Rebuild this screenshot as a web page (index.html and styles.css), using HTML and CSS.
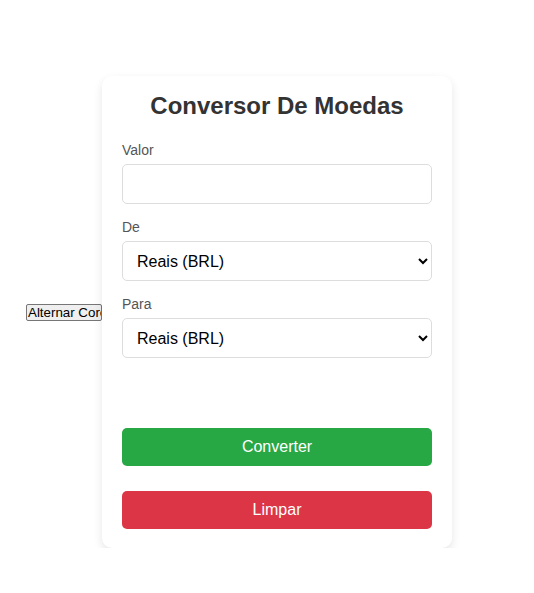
FILE: index.html
```html
<!DOCTYPE html>
<html lang="pt-BR">
<head>
<meta charset="UTF-8">
<title>Conversor De Moedas</title>
<link rel="stylesheet" href="styles.css">
</head>
<body>
  <button class="toggle-btn" type="button">Alternar Cores</button>
  <div class="card">
    <h2 class="title">Conversor De Moedas</h2>
    <div class="field">
      <label class="label" for="valor">Valor</label>
      <input class="control" id="valor" type="number">
    </div>
    <div class="field">
      <label class="label" for="de">De</label>
      <select class="control" id="de">
        <option>Reais (BRL)</option>
        <option>Dólar (USD)</option>
        <option>Euro (EUR)</option>
      </select>
    </div>
    <div class="field">
      <label class="label" for="para">Para</label>
      <select class="control" id="para">
        <option>Reais (BRL)</option>
        <option>Dólar (USD)</option>
        <option>Euro (EUR)</option>
      </select>
    </div>
    <div class="result"></div>
    <div class="actions">
      <button class="btn btn-convert" type="button">Converter</button>
      <button class="btn btn-clear" type="button">Limpar</button>
    </div>
  </div>
</body>
</html>
```
FILE: styles.css
```css
html, body {
  margin: 0;
  padding: 0;
  background: #ffffff;
}

body {
  display: flex;
  align-items: center;
  padding: 76px 0 0 26px;
  font-family: "Liberation Sans", Arial, sans-serif;
}

.toggle-btn {
  flex-shrink: 0;
  width: 76px;
  height: 17px;
  padding: 0 1px;
  margin: 0;
  border: 1px solid #767676;
  border-radius: 2px;
  background: #efefef;
  color: #000;
  font-family: "Liberation Sans", Arial, sans-serif;
  font-size: 13.33px;
  line-height: 15px;
  white-space: nowrap;
  overflow: hidden;
  text-align: left;
  box-sizing: border-box;
}

.card {
  flex-shrink: 0;
  width: 350px;
  box-sizing: border-box;
  padding: 16px 20px 19px;
  background: #fff;
  border-radius: 10px;
  box-shadow: 0 4px 10px rgba(0, 0, 0, 0.1);
}

.title {
  margin: 0 0 22px;
  text-align: center;
  font-size: 24px;
  line-height: 28px;
  font-weight: bold;
  color: #333;
}

.field {
  margin-bottom: 15px;
}

.label {
  display: block;
  font-size: 14px;
  line-height: 16px;
  color: #555;
  margin-bottom: 6px;
}

.control {
  display: block;
  width: 100%;
  height: 40px;
  box-sizing: border-box;
  padding: 10px;
  border: 1px solid #ddd;
  border-radius: 5px;
  background: #fff;
  font-family: "Liberation Sans", Arial, sans-serif;
  font-size: 16px;
  color: #000;
}

.result {
  height: 30px;
  margin: 20px 0;
}

.actions {
  display: flex;
  flex-direction: column;
  gap: 25px;
}

.btn {
  display: block;
  width: 100%;
  height: 38px;
  border: none;
  border-radius: 5px;
  color: #fff;
  font-family: "Liberation Sans", Arial, sans-serif;
  font-size: 16px;
  cursor: pointer;
}

.btn-convert {
  background: #28a745;
}

.btn-clear {
  background: #dc3545;
}
```
